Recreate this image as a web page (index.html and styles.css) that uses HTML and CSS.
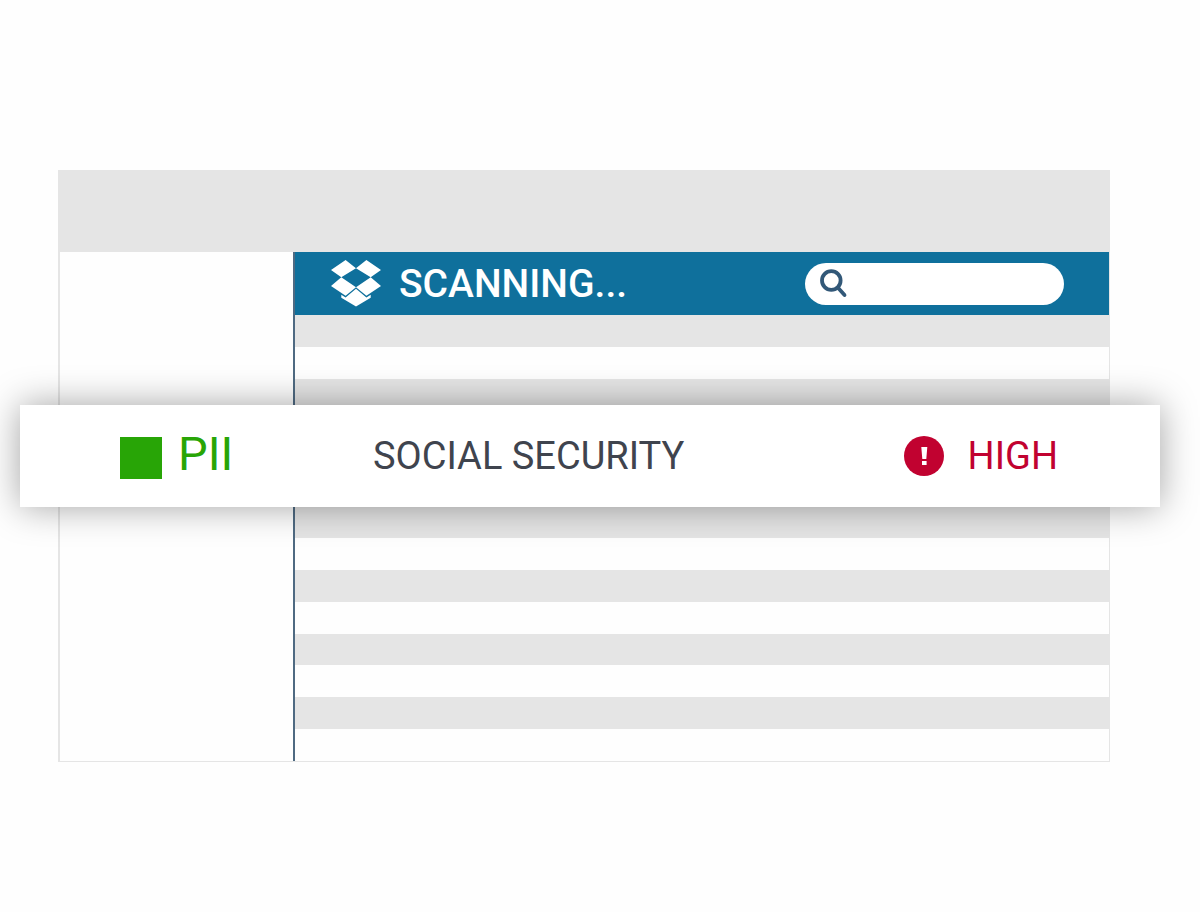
FILE: index.html
```
<!DOCTYPE html>
<html lang="en">
<head>
  <meta charset="UTF-8">
  <meta name="viewport" content="width=device-width, initial-scale=1.0">
  <title>Scanning</title>
  <link rel="stylesheet" href="styles.css">
</head>
<body>
  <main class="window">
    <div class="window-header"></div>

    <div class="window-body">
      <aside class="sidebar"></aside>

      <section class="content">
        <header class="toolbar">
          <svg class="logo" viewBox="0 0 50 47" aria-hidden="true">
            <path d="M0 10 14.6 0 25 8.3 10.3 17.3zM50 10 35.4 0 25 8.3 39.7 17.3zM0 26 10.3 17.3 25 27.3 14.6 35.7zM50 26 39.7 17.3 25 27.3 35.4 35.7z"/>
            <path d="M25 28.8 35.4 37.4 39.7 34.8V37.8L25 46.5 10.3 37.8V34.8L14.6 37.4z"/>
          </svg>
          <h1>SCANNING...</h1>
          <label class="search">
            <svg class="search-icon" viewBox="0 0 28 28" aria-hidden="true">
              <circle cx="12.3" cy="10.5" r="9.3"/>
              <path d="M19 17.8 25.5 25"/>
            </svg>
            <input type="search" aria-label="Search">
          </label>
        </header>

        <ul class="rows">
          <li></li>
          <li></li>
          <li></li>
          <li></li>
          <li></li>
          <li></li>
          <li></li>
          <li></li>
          <li></li>
          <li></li>
          <li></li>
          <li></li>
          <li></li>
          <li></li>
        </ul>
      </section>
    </div>

    <!-- highlighted result, floats over the list -->
    <article class="result">
      <div class="type">
        <span class="swatch"></span>
        <span>PII</span>
      </div>
      <div class="name">SOCIAL SECURITY</div>
      <div class="severity">
        <svg class="alert" viewBox="0 0 40 40" aria-hidden="true">
          <circle cx="20" cy="20" r="20"/>
          <path d="M17.3 11h6l-1 12h-4zM18 25h4.6v4H18z"/>
        </svg>
        <span>HIGH</span>
      </div>
    </article>
  </main>
</body>
</html>
```
FILE: styles.css
```
* {
  margin: 0;
  padding: 0;
  box-sizing: border-box;
}

body {
  font-family: Roboto, 'Liberation Sans', sans-serif;
  background: #fefefe;
  padding: 170px 90px 40px 58px;
}

.window {
  position: relative;
  display: flex;
  flex-direction: column;
  min-height: 592px;
  border: solid #e5e5e5;
  border-width: 0 1px 1px 2px;
}

.window-header {
  height: 82px;
  background: #e5e5e5;
}

.window-body {
  flex: 1;
  display: flex;
}

.sidebar {
  width: 233px;
}

.content {
  flex: 1;
  display: flex;
  flex-direction: column;
  border-left: 2px solid #4f6a82;
}

.toolbar {
  display: flex;
  align-items: center;
  height: 63px;
  padding: 0 45px 0 36px;
  background: #0f709c;
  color: white;
}

.logo {
  width: 50px;
  height: 47px;
  margin-right: 18px;
  fill: white;
}

h1 {
  font-size: 39px;
  font-weight: 500;
}

.search {
  display: flex;
  align-items: center;
  width: 259px;
  height: 42px;
  margin-left: auto;
  padding: 0 14px;
  background: white;
  border-radius: 21px;
}

.search-icon {
  flex: none;
  width: 28px;
  height: 28px;
  overflow: visible;
  fill: none;
  stroke: #325878;
  stroke-width: 3.8;
  stroke-linecap: round;
}

.search input {
  flex: 1;
  min-width: 0;
  margin-left: 8px;
  border: none;
  outline: none;
  background: none;
  font: inherit;
  font-size: 20px;
}

.rows {
  flex: 1;
  display: flex;
  flex-direction: column;
  list-style: none;
}

.rows li {
  flex: 1;
}

.rows li:nth-child(odd) {
  background: #e5e5e5;
}

.result {
  position: absolute;
  top: 235px;
  left: -40px;
  right: -51px;
  display: grid;
  grid-template-columns: 253px 1fr auto;
  align-items: center;
  height: 102px;
  padding: 0 102px 0 100px;
  background: white;
  box-shadow: 0 0 36px rgba(0, 0, 0, 0.36);
  font-size: 38px;
}

.type,
.severity {
  display: flex;
  align-items: center;
}

.type {
  align-items: flex-start;
  gap: 16px;
  padding-top: 4px;
  color: #28a506;
  font-size: 47px;
  line-height: 34px;
}

.swatch {
  width: 42px;
  height: 42px;
  background: #28a506;
}

.name {
  color: #3f444e;
}

.severity {
  gap: 24px;
  color: #c10230;
}

.alert {
  width: 40px;
  height: 40px;
  fill: #c10230;
}

.alert path {
  fill: white;
}
```
